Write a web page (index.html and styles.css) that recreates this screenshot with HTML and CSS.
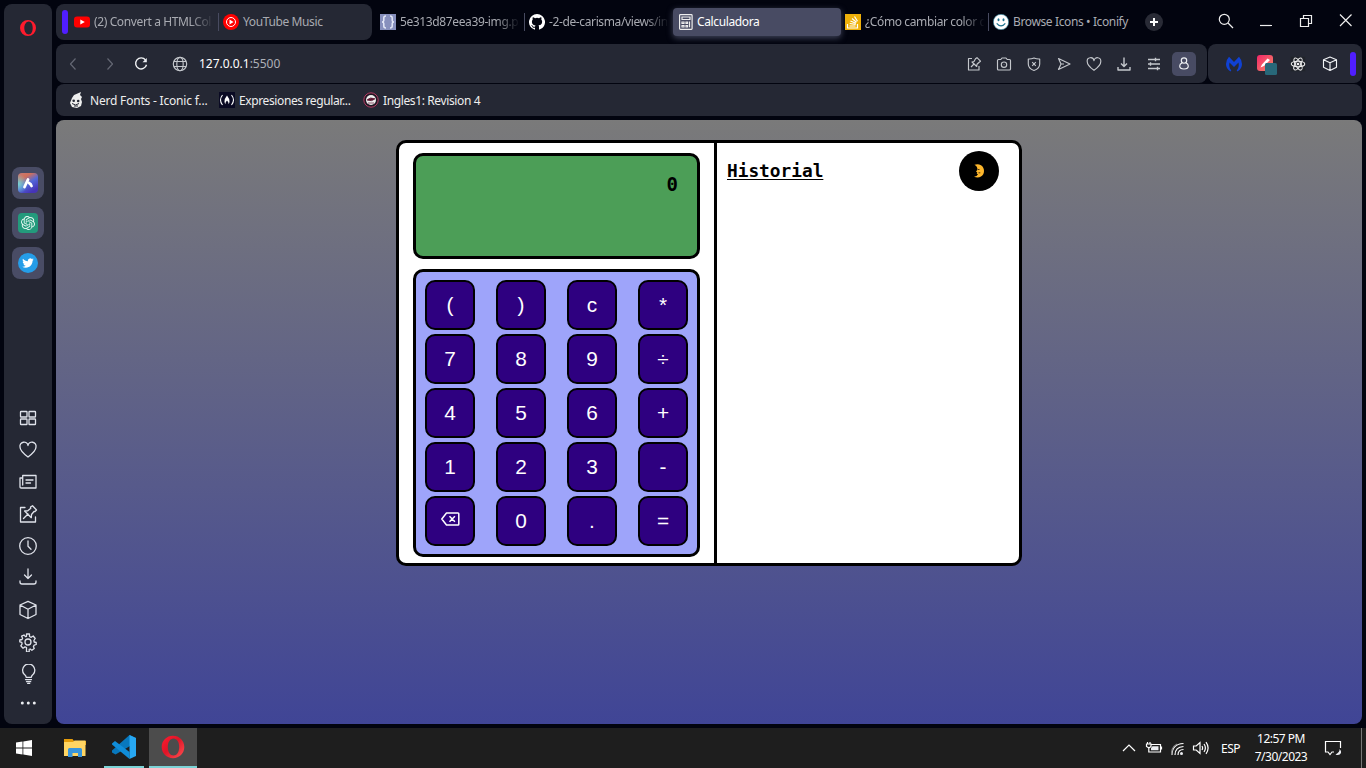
FILE: index.html
```html
<!DOCTYPE html>
<html lang="es">
<head>
<meta charset="utf-8">
<title>Calculadora</title>
<link rel="stylesheet" href="styles.css">
</head>
<body>
<div class="browser">
  <aside class="sidebar">
    <svg class="opera-logo" width="18" height="18" viewBox="0 0 18 18"><path fill="#ff1b2d" fill-rule="evenodd" d="M9 1a8 8 0 1 0 0 16A8 8 0 0 0 9 1zM9.800 2.500c2.500 0 3.900 2.900 3.900 6.500s-1.400 6.500-3.900 6.500S5.300 12.600 5.300 9s2-6.500 4.500-6.500z"/></svg>
    <div class="apps">
      <span class="app"><svg width="20" height="20" viewBox="0 0 20 20"><defs><linearGradient id="ar" x1="0" y1="0" x2=".6" y2="1"><stop offset="0" stop-color="#c77a76"/><stop offset=".3" stop-color="#d0705b"/><stop offset=".6" stop-color="#5268d8"/><stop offset="1" stop-color="#4634b8"/></linearGradient><radialGradient id="ac" cx="0" cy=".55" r=".5"><stop offset="0" stop-color="#73d5d8"/><stop offset="1" stop-color="#73d5d8" stop-opacity="0"/></radialGradient></defs><rect width="20" height="20" rx="4" fill="url(#ar)"/><rect width="20" height="20" rx="4" fill="url(#ac)"/><path d="M6.500 14 10 6.500M11 10q2 1 2.500 3" stroke="#fff" stroke-width="2.800" stroke-linecap="round" fill="none"/></svg></span>
      <span class="app"><svg width="20" height="20" viewBox="0 0 20 20"><rect width="20" height="20" rx="4" fill="#239a7c"/><path transform="translate(3 3) scale(.583)" fill="#e9faf4" d="M22.280 9.820a5.980 5.980 0 0 0-.52-4.910 6.050 6.050 0 0 0-6.510-2.900A6.070 6.070 0 0 0 4.980 4.180a5.980 5.980 0 0 0-4 2.900 6.050 6.050 0 0 0 .74 7.100 5.980 5.980 0 0 0 .51 4.910 6.050 6.050 0 0 0 6.510 2.900A5.980 5.980 0 0 0 13.260 24a6.060 6.060 0 0 0 5.770-4.210 5.990 5.990 0 0 0 4-2.900 6.060 6.060 0 0 0-.75-7.070zM13.260 22.430a4.480 4.480 0 0 1-2.880-1.040l.14-.08 4.780-2.760a.8.8 0 0 0 .39-.68v-6.740l2.020 1.170a.07.07 0 0 1 .04.05v5.580a4.500 4.500 0 0 1-4.490 4.500zM3.600 18.300a4.470 4.470 0 0 1-.54-3.010l.14.080 4.780 2.760a.77.77 0 0 0 .78 0l5.840-3.370v2.330a.08.08 0 0 1-.03.06L9.740 19.950A4.500 4.500 0 0 1 3.600 18.300zM2.340 7.900a4.490 4.490 0 0 1 2.370-1.970V11.600a.77.77 0 0 0 .39.68l5.810 3.350-2.020 1.170a.08.08 0 0 1-.07 0L3.990 14.010A4.500 4.500 0 0 1 2.340 7.900zM18.940 11.750l-5.840-3.370 2.020-1.160a.08.08 0 0 1 .07 0l4.830 2.790a4.490 4.490 0 0 1-.68 8.100v-5.680a.79.79 0 0 0-.4-.68zM20.950 8.720l-.14-.09-4.780-2.760a.78.78 0 0 0-.78 0L9.410 9.240V6.910a.07.07 0 0 1 .03-.06l4.830-2.790a4.500 4.500 0 0 1 6.680 4.660zM8.310 12.860l-2.020-1.160a.08.08 0 0 1-.04-.06V6.070a4.500 4.500 0 0 1 7.380-3.450l-.14.08-4.780 2.760a.8.8 0 0 0-.39.68zM9.400 10.500 12 9l2.610 1.500v3L12 15l-2.600-1.500z" fill-rule="evenodd"/></svg></span>
      <span class="app"><svg width="20" height="20" viewBox="0 0 20 20"><circle cx="10" cy="10" r="10" fill="#259de8"/><path transform="translate(4.200 4.300) scale(.48)" fill="#fff" d="M23.950 4.570a10 10 0 0 1-2.820.77 4.960 4.960 0 0 0 2.160-2.720c-.95.550-2 .95-3.130 1.180a4.920 4.920 0 0 0-8.380 4.480C7.690 8.090 4.070 6.130 1.640 3.160a4.820 4.820 0 0 0-.67 2.470c0 1.710.87 3.210 2.190 4.100a4.900 4.900 0 0 1-2.230-.62v.06a4.920 4.920 0 0 0 3.950 4.830 5 5 0 0 1-2.210.08 4.940 4.940 0 0 0 4.600 3.420A9.870 9.870 0 0 1 0 19.540a13.990 13.990 0 0 0 7.550 2.210c9.050 0 14-7.500 14-13.980v-.64a9.940 9.940 0 0 0 2.400-2.560z"/></svg></span>
    </div>
    <nav class="side-icons">
      <span><svg viewBox="0 0 20 20"><rect x="2.500" y="3.500" width="6.500" height="5.500" rx=".6"/><rect x="11" y="3.500" width="6.500" height="5.500" rx=".6"/><rect x="2.500" y="11" width="6.500" height="5.500" rx=".6"/><rect x="11" y="11" width="6.500" height="5.500" rx=".6"/></svg></span>
      <span><svg viewBox="0 0 20 20"><path d="M10 17C6 14 2 10.500 2 7a4 4 0 0 1 8-1.500A4 4 0 0 1 18 7c0 3.500-4 7-8 10z"/></svg></span>
      <span><svg viewBox="0 0 20 20"><path d="M4.700 3.500H18v12.500H3.200q-1.200 0-1.200-1.200V6h2.700zM4.700 6v7M8 8h7M8 11h4.500"/></svg></span>
      <span><svg viewBox="0 0 20 20"><path d="M7 3.500H2.500v14.500H17.500v-5M12.500 3l2-1.300L18.500 6l-1.500 1.500-1 0-2.500 3-.2 3.200-6.700-6.700 3.200-.2 3-2.500zM10 10l-4.500 4.500"/></svg></span>
      <span><svg viewBox="0 0 20 20"><circle cx="10" cy="10" r="8.300"/><path d="M10 5v5.300l3 3"/></svg></span>
      <span><svg viewBox="0 0 20 20"><path d="M10 1v9.500M6.500 7l3.500 3.500L13.500 7M2 13v1q0 2 2 2h12q2 0 2-2v-1"/></svg></span>
      <span><svg viewBox="0 0 20 20"><path d="M10 1.300 18 5v9.500l-8 4-8-4V5zM2 5l8 4.300L18 5M10 9.300v9"/></svg></span>
      <span><svg viewBox="0 0 20 20"><circle cx="10" cy="10" r="3"/><path d="M8.500 2h3v2.500l1.700.8 2-1.300 2 2.500-1.300 2 .3 1.500 2 .5v2l-2 .6-.8 1.500.8 2-2.300 1.700-1.700-1.300-1 .3v2.500H8.500V15.500l-1.500-.6-2 1.300-2.200-2.400 1.300-2-.3-1.500-2-.5V8l2.200-.5.600-1.300-1-2L6 3l1.500 1.600 1-.3z"/></svg></span>
      <span><svg viewBox="0 0 20 20"><path d="M8.300 13.300Q8 11.500 6 10a6.100 6.100 0 1 1 9.400 0q-1.900 1.500-2.200 3.300zM7.500 15.600h6M8.500 17.700h4.200M9.700 19.500h2"/></svg></span>
      <span class="more"><svg viewBox="0 0 20 20"><g class="solid"><circle cx="4.300" cy="10" r="1.500"/><circle cx="10.300" cy="10" r="1.500"/><circle cx="16.300" cy="10" r="1.500"/></g></svg></span>
    </nav>
  </aside>
  <main class="main">
    <header class="tabs">
      <div class="tab-group">
        <i class="accent"></i>
        <div class="tab split"><svg class="fav" viewBox="0 0 16 16"><rect y="2.500" width="16" height="11" rx="3" fill="#f00"/><path fill="#fff" d="M6.300 5.400v5.200L10.800 8z"/></svg><span class="title fade">(2) Convert a HTMLCol</span></div>
        <div class="tab"><svg class="fav" viewBox="0 0 16 16"><circle cx="8" cy="8" r="8" fill="#f00"/><circle cx="8" cy="8" r="4.500" fill="none" stroke="#fff"/><path fill="#fff" d="M6.500 5.500v5L10.600 8z"/></svg><span class="title">YouTube Music</span></div>
      </div>
      <div class="tab split"><svg class="fav" viewBox="0 0 16 16"><rect width="16" height="16" fill="#8790bd"/><path d="M6 2Q3.800 2 3.800 4v2.500Q3.800 8 2 8q1.800 0 1.800 1.500V12q0 2 2.200 2M10 2q2.200 0 2.200 2v2.500Q12.200 8 14 8q-1.800 0-1.800 1.500V12q0 2-2.200 2" fill="none" stroke="#e3e7f7" stroke-width="1.500"/></svg><span class="title fade">5e313d87eea39-img.p</span></div>
      <div class="tab wide"><svg class="fav" viewBox="0 0 16 16"><path fill="#fff" d="M8 0a8 8 0 0 0-2.530 15.590c.4.070.55-.17.550-.38v-1.490c-2.230.49-2.700-.95-2.700-.95-.36-.92-.89-1.170-.89-1.170-.73-.5.060-.49.060-.49.800.06 1.230.83 1.230.83.710 1.220 1.870.87 2.330.66.070-.52.280-.87.510-1.070-1.780-.2-3.640-.89-3.640-3.950 0-.87.310-1.590.82-2.150-.08-.2-.36-1.020.08-2.120 0 0 .67-.21 2.200.82a7.660 7.660 0 0 1 4 0c1.530-1.040 2.200-.82 2.200-.82.440 1.100.160 1.920.080 2.120.51.560.820 1.270.820 2.150 0 3.070-1.870 3.750-3.650 3.950.290.250.540.730.540 1.480v2.200c0 .21.150.46.550.38A8 8 0 0 0 8 0z"/></svg><span class="title fade">-2-de-carisma/views/in</span></div>
      <div class="tab active"><svg class="fav" viewBox="0 0 16 16"><g fill="none" stroke="#eee" stroke-width="1.200"><rect x="1.600" y=".6" width="12.500" height="14.800" rx=".8"/><path d="M4 3h8v2.500H4zM4 8h2v1.500H4zM4 11.500h2V13H4zM8 8h1.500v1.500H8zM8 11.500h1.500V13H8zM11.500 7.500v5.800"/></g></svg><span class="title">Calculadora</span></div>
      <div class="tab so split"><svg class="fav" viewBox="0 0 16 16"><rect width="16" height="16" fill="#efb10a"/><path d="M2.500 10v4h10v-4M4.500 12h6M4.700 9.500l6 .9M5.400 7l5.500 2.300M7 4.500l4.500 3.800M9.500 2.500l3 4.800" stroke="#fff" stroke-width="1.200" fill="none"/></svg><span class="title fade">¿Cómo cambiar color d</span></div>
      <div class="tab last"><svg class="fav" viewBox="0 0 16 16"><circle cx="8" cy="8" r="7.700" fill="#fff" stroke="#1b718d" stroke-width=".6"/><ellipse cx="5.500" cy="5.800" rx="1" ry="1.500" fill="#1b718d"/><ellipse cx="10.500" cy="5.800" rx="1" ry="1.500" fill="#1b718d"/><path d="M3.700 9.300Q8 14.500 12.300 9.300" stroke="#1b718d" stroke-width="1.200" fill="none"/></svg><span class="title">Browse Icons • Iconify</span></div>
      <span class="plus"><svg width="18" height="18" viewBox="0 0 18 18"><circle cx="9" cy="9" r="9" fill="#292b36"/><path d="M9 5v8M5 9h8" stroke="#fff" stroke-width="2"/></svg></span>
      <div class="window-controls">
        <svg width="20" height="20" viewBox="0 0 20 20"><circle cx="8.300" cy="7.300" r="5"/><path d="m12 11 5 5"/></svg>
        <svg width="20" height="20" viewBox="0 0 20 20"><path d="M4 13.500h12"/></svg>
        <svg width="20" height="20" viewBox="0 0 20 20"><path d="M4.500 6.500h8v8h-8zM7.500 6V3.500h8v8H13"/></svg>
        <svg width="20" height="20" viewBox="0 0 20 20"><path d="m4 2.500 11.500 11.500m0-11.500L4 14"/></svg>
      </div>
    </header>
    <div class="toolbar">
      <div class="address">
        <svg class="ic dim back" viewBox="0 0 20 20"><path d="M12.500 4.500 7.500 10l5 5.500"/></svg>
        <svg class="ic dim fwd" viewBox="0 0 20 20"><path d="m7.500 4.500 5 5.500-5 5.500"/></svg>
        <svg class="ic bright reload" viewBox="0 0 20 20"><path d="M14.500 6a5.500 5.500 0 1 0 1 4.800" stroke-width="1.400"/><path class="solid" d="M15.800 4v4.300h-4.300z"/></svg>
        <svg class="ic globe" viewBox="0 0 20 20"><circle cx="10" cy="10" r="6.700"/><ellipse cx="10" cy="10" rx="3.200" ry="6.700"/><path d="M4 7.500h12M4 12.500h12"/></svg>
        <span class="url">127.0.0.1<span>:5500</span></span>
        <div class="actions">
          <span><svg class="ic" viewBox="0 0 20 20"><path d="M8 4.500H4.500v11.500h10.500v-4M11.500 4.800 13 3.700l3.500 3.500-1.300 1-2.200 2-.3 2.300L8 8l2-.5zM10.500 9.500l-3.500 3.500"/></svg></span>
          <span><svg class="ic" viewBox="0 0 20 20"><path d="M4.500 5.500h2.300l1.200-1.500h4l1.200 1.500h2.300q1 0 1 1V15q0 1-1 1h-11q-1 0-1-1V6.500q0-1 1-1z"/><circle cx="10" cy="10.700" r="2.700"/><circle class="solid" cx="10" cy="10.700" r=".4"/></svg></span>
          <span><svg class="ic" viewBox="0 0 20 20"><path d="M10 4q3 1.200 5.700 1v5q0 4.500-5.700 6.500Q4.300 14.500 4.300 10V5q2.700.2 5.700-1zM8.200 8.200l3.600 3.600m0-3.600-3.600 3.600"/></svg></span>
          <span><svg class="ic" viewBox="0 0 20 20"><path d="M4.500 4.500 16 10 4.500 15.500 7 10zM7 10h3"/></svg></span>
          <span><svg class="ic" viewBox="0 0 20 20"><path d="M10 16.300C6 13.500 3.200 11 3.200 7.500a3.400 3.400 0 0 1 6.800-.8 3.400 3.400 0 0 1 6.800.8c0 3.500-2.800 6-6.800 8.800z"/></svg></span>
          <span><svg class="ic" viewBox="0 0 20 20"><path d="M10 3.500v9M7 9.500l3 3 3-3M4 13v3h12v-3" stroke-width="1.400"/></svg></span>
          <span><svg class="ic" viewBox="0 0 20 20"><path d="M4 5.500h12M4 10h12M4 14.500h12M11.500 3.800v3.400M6.500 8.300v3.400M13.500 12.800v3.400" stroke-width="1.400"/></svg></span>
          <span class="profile"><svg class="ic bright" viewBox="0 0 20 20"><circle cx="10" cy="6.500" r="2.700"/><path d="M8.200 8.800Q5.700 10 5.700 12q0 3 4.300 3t4.300-3q0-2-2.500-3.200"/></svg></span>
        </div>
      </div>
      <div class="extensions">
        <svg width="20" height="20" viewBox="0 0 20 20"><path fill="#1041d2" d="M6.500 17.500Q2 15 2 10 2 6 5 2.800L10 8l5-5.200Q18 6 18 10q0 5-4.500 7.500l-.8-1Q15.500 13 14.500 8.500L10 13 5.500 8.500Q4.500 13 7.300 16.500z"/></svg>
        <svg width="22" height="22" viewBox="0 0 22 22"><defs><linearGradient id="pk" x1="0" y1="0" x2="1" y2="1"><stop stop-color="#f32568"/><stop offset="1" stop-color="#f58c67"/></linearGradient></defs><rect x="1" y="2" width="16" height="16" rx="3" fill="url(#pk)"/><path d="M4.500 14.500 6 11.500l5.500-6L14 7 8 13z" fill="#fff"/><rect x="9" y="10" width="12" height="12" rx="1.500" fill="#286879"/></svg>
        <svg width="18" height="18" viewBox="0 0 20 20"><rect x="2" y="2" width="16" height="16" fill="#20232a"/><g fill="none" stroke="#eee" stroke-width="1.200"><ellipse cx="10" cy="10" rx="7.500" ry="3"/><ellipse cx="10" cy="10" rx="7.500" ry="3" transform="rotate(60 10 10)"/><ellipse cx="10" cy="10" rx="7.500" ry="3" transform="rotate(120 10 10)"/></g><circle cx="10" cy="10" r="1.500" fill="#eee"/></svg>
        <svg class="ic bright" viewBox="0 0 20 20"><path d="M10 3 16.500 5.700v7.500L10 16.400 3.500 13.200V5.700zM3.500 5.700l6.500 3 6.500-3M10 8.700v7.500"/></svg>
        <i class="accent"></i>
      </div>
    </div>
    <div class="bookmarks">
      <span class="bookmark b1"><svg width="16" height="16" viewBox="0 0 16 16"><path fill="#eee" d="M5 3 12 0l-1 3 2 2-1 2 1 3-1 4-4 2-5-1-2-4 2-5z"/><circle cx="4.700" cy="8.700" r="1.300" fill="#252834"/><circle cx="9.200" cy="9" r="1.300" fill="#252834"/><path d="M3 11.500q3.500 3 7 0M5 14h4" stroke="#252834" fill="none"/></svg><span>Nerd Fonts - Iconic f...</span></span>
      <span class="bookmark b2"><svg width="16" height="16" viewBox="0 0 16 16"><rect width="16" height="16" fill="#0a0a23"/><path d="M3.500 3Q-.5 8 3.500 13M12.500 3q4 5 0 10" stroke="#fff" stroke-width="1.100" fill="none"/><path fill="#fff" d="M8 3.500q-2.500 3-2.500 6Q5.500 11 6.500 12q-.3-2 1.500-3.500Q9.800 10 9.500 12q1-1 1-2.500 0-3-2.500-6z"/></svg><span>Expresiones regular...</span></span>
      <span class="bookmark b3"><svg width="16" height="16" viewBox="0 0 16 16"><circle cx="8" cy="8" r="7.200" fill="#221824" stroke="#b23c62"/><circle cx="8" cy="8" r="5" fill="#eee"/><path d="M4 8q3-3.500 8-1.200Q9 10 4 8zM5 11h6" fill="#5a1630" stroke="#5a1630" stroke-width=".7"/></svg><span>Ingles1: Revision 4</span></span>
    </div>
    <section class="page">
      <div class="calculator">
        <div class="left">
          <div class="display">0</div>
          <div class="keys">
            <button>(</button><button>)</button><button>c</button><button>*</button>
            <button>7</button><button>8</button><button>9</button><button>÷</button>
            <button>4</button><button>5</button><button>6</button><button>+</button>
            <button>1</button><button>2</button><button>3</button><button>-</button>
            <button class="erase"><svg width="20" height="16" viewBox="0 0 20 16"><path d="M6.500 2H18q.8 0 .8.800v10.400q0 .8-.8.800H6.500L1.800 8zM9.500 5.300l5.400 5.400m0-5.400-5.400 5.400" fill="none" stroke="#fff" stroke-width="1.500" stroke-linejoin="round"/></svg></button><button>0</button><button>.</button><button>=</button>
          </div>
        </div>
        <div class="history">
          <h3>Historial</h3>
          <span class="theme"><svg width="12" height="16" viewBox="0 0 12 16"><path fill="#fdb62c" d="M1.500 1.800Q5 .5 8 2.300q3 2 3 5.700t-3 5.500q-3 1.800-7 .2 3-.5 4-2.500L3.700 10.500l.6-1L3 8.500l1.500-1.700Q4.500 3.500 1.500 1.800z"/><path d="M5 6.500h1.500M5.500 9.800h1.800" stroke="#4b3511"/></svg></span>
        </div>
      </div>
    </section>
  </main>
</div>
<footer class="taskbar">
  <div class="launchers">
    <span class="task"><svg width="18" height="18" viewBox="0 0 18 18"><path fill="#fff" d="M1 3.500 7.500 2.500v6H1zM8.300 2.400 17 1v7.500H8.300zM1 9.500h6.500v6L1 14.500zM8.300 9.500H17V17l-8.700-1.400z"/></svg></span>
    <span class="task explorer"><svg width="22" height="20" viewBox="0 0 22 20"><path fill="#e59c0a" d="M0 1h8.500l1.500 2H22v4H0z"/><path fill="#ffd563" d="M0 4h9l1.500-1.500H21.500V18H0z"/><path fill="#3895dc" d="M4 11.500q0-1.500 1.500-1.500h11q1.500 0 1.500 1.500V19h-4v-4H8.500v4H4z"/></svg></span>
    <span class="task code"><svg width="24" height="24" viewBox="0 0 24 24"><path fill="#0878bd" d="M17.500 0 24 3v4.500L3.500 19.500 0 17.500v-2z"/><path fill="#108dd9" d="M0 8.500 3 6l14.500 11v7L0 9.500z"/><path fill="#27a8f3" d="M17.500 0 24 3v18l-6.500 3z"/></svg></span>
    <span class="task opera"><svg width="24" height="24" viewBox="0 0 24 24"><defs><linearGradient id="op" x1="0" y1="0" x2="1" y2="1"><stop stop-color="#ff1c30"/><stop offset=".45" stop-color="#df1427"/><stop offset="1" stop-color="#ff5151"/></linearGradient></defs><path fill="url(#op)" fill-rule="evenodd" d="M12 .8C5.600.8.700 5.700.700 12S5.600 23.200 12 23.200 23.300 18.300 23.300 12 18.400.8 12 .8zM12.500 3.500c3.300 0 5.700 3.500 5.700 8.500s-2.400 8.500-5.700 8.500S6.800 17 6.800 12 9.200 3.500 12.500 3.500z"/></svg></span>
  </div>
  <div class="tray">
    <svg class="w1" width="16" height="18" viewBox="0 0 16 18"><path d="m2 12 6-6 6 6"/></svg>
    <svg class="w2" width="18" height="18" viewBox="0 0 18 18"><path d="M6 5.500h9.500v7.500H5.500M16.500 7.500v3M2.500 3v2M5 3v2M1.500 5h4.500v2.500l-2 1.500-2.500-1.500zM3.800 9v4H6"/><path class="fill" d="M7.500 7.200h6v4H6V9z"/></svg>
    <svg class="w3" width="18" height="18" viewBox="0 0 18 18"><path d="M3 16Q3 5 14.500 4.500M6 16Q6 8 14.500 7.500M9 16q0-5.500 5.500-5.500" stroke-width="1.200"/><path d="M3 16Q1.500 9 8 5" stroke="#888"/><circle class="fill" cx="12.500" cy="14.500" r="1.500"/></svg>
    <svg class="w4" width="18" height="18" viewBox="0 0 18 18"><path d="M1.500 7h2.700l3.800-3.500v11L4.200 11H1.500zM10 7q1.200 2 0 4M12 5q2.800 4 0 8M14 3.200q4.200 5.800 0 11.600"/></svg>
    <span class="lang">ESP</span>
    <div class="clock"><span class="time">12:57 PM</span><span class="date">7/30/2023</span></div>
    <svg class="w5" width="18" height="18" viewBox="0 0 18 18"><path d="M10 13H8l-2 2.500L4 13H1.500V2.500h15V9"/><path class="fill" d="M15.500 10q.5 3-4 5.500 4 1.500 5.500-1.500.7-2-1.500-4z"/></svg>
    <i class="peek"></i>
  </div>
</footer>
</body>
</html>
```
FILE: styles.css
```css
* { box-sizing: border-box; }
body { margin: 0; width: 1366px; height: 768px; overflow: hidden; background: #02040f; font: 12px "Noto Sans", "Open Sans", sans-serif; color: #eee; }
svg { display: block; flex: none; }
.browser { display: flex; gap: 4px; height: 728px; padding: 4px; }
.sidebar { width: 48px; height: 720px; border-radius: 8px; background: #252834; display: flex; flex-direction: column; align-items: center; }
.opera-logo { margin-top: 15px; }
.apps { display: flex; flex-direction: column; gap: 8px; margin-top: 130px; }
.app { display: flex; width: 32px; height: 32px; border-radius: 8px; background: #494c65; align-items: center; justify-content: center; padding-bottom: 1px; }
.side-icons { display: flex; flex-direction: column; margin-top: 122.5px; }
.side-icons span { width: 32px; height: 32px; display: flex; align-items: center; justify-content: center; padding-right: 1px; }
.side-icons .more { height: 27px; }
.side-icons svg { width: 20px; height: 20px; fill: none; stroke: #dfe2ea; stroke-width: 1.3; stroke-linejoin: round; stroke-linecap: round; }
svg .solid, .tray .fill { fill: #eceef2; stroke: none; }
.main { flex: 1; min-width: 0; display: flex; flex-direction: column; }
.tabs { display: flex; height: 36px; align-items: center; }
.tab-group { display: flex; align-items: center; width: 316px; height: 36px; border-radius: 8px; background: #252834; margin-right: 8px; padding-left: 6px; }
.accent { width: 6px; height: 24px; border-radius: 3px; background: #501eff; flex: none; }
.tab-group .accent { margin-right: 6px; }
.tab { display: flex; align-items: center; width: 149px; height: 28px; gap: 4px; color: #a9abb2; flex: none; position: relative; white-space: nowrap; }
.fav { width: 16px; height: 16px; }
.title { line-height: 18px; }
.fade { width: 120px; -webkit-mask-image: linear-gradient(90deg, #000 80%, transparent 100%); mask-image: linear-gradient(90deg, #000 80%, transparent 100%); }
.split::after { content: ""; position: absolute; right: 4px; top: 5px; width: 1px; height: 18px; background: #484b60; }
.tab.wide { width: 144px; }
.tab.active { width: 168px; padding-left: 5px; background: #484b63; border-radius: 4px; color: #fff; box-shadow: 0 2px 6px #41455b; gap: 3px; }
.tab.so { margin-left: 4px; width: 148px; }
.tab.last { width: 152px; }
.window-controls { display: flex; gap: 20px; margin-left: auto; padding-right: 6px; }
.window-controls svg { fill: none; stroke: #eee; stroke-width: 1.2; }
.toolbar { display: flex; gap: 1px; margin-top: 4px; height: 39px; }
.address, .extensions { background: #252834; border-radius: 8px; display: flex; align-items: center; }
.address { width: 1151px; padding-left: 7px; }
.ic { width: 20px; height: 20px; fill: none; stroke: #c4c7cc; stroke-width: 1.15; stroke-linejoin: round; }
.dim { stroke: #656874; }
.bright { stroke: #f0f2f4; }
.fwd { margin-left: 17px; }
.reload { margin-left: 11px; }
.globe { margin-left: 19px; }
.url { margin-left: 9px; color: #fff; letter-spacing: -.02px; }
.url span { color: #adb0b8; }
.actions { display: flex; margin-left: auto; padding-right: 8px; }
.actions > span { width: 30px; height: 24px; display: flex; align-items: center; justify-content: center; }
.actions .profile { width: 24px; margin: 0 3px; border-radius: 5px; background: #484b63; }
.extensions { width: 154px; padding-left: 16px; }
.extensions svg:nth-child(2) { margin-left: 12px; }
.extensions svg:nth-child(3) { margin-left: 11px; }
.extensions svg:nth-child(4) { margin-left: 13px; }
.extensions .accent { margin-left: 10px; }
.bookmarks { display: flex; align-items: center; margin-top: 1px; height: 32px; border-radius: 8px; background: #252834; padding-left: 13px; }
.bookmark { display: flex; align-items: center; gap: 4px; white-space: nowrap; }
.b1 { width: 150px; gap: 5px; }
.b2 { width: 144px; }
.page { margin-top: 4px; height: 604px; border-radius: 8px; background: linear-gradient(#7a7a7a, #404596); padding: 20px 0 0 340px; }
.calculator { display: flex; width: 626px; height: 426px; border: 3px solid #000; border-radius: 10px; background: #fff; color: #000; }
.left { width: 318px; border-right: 3px solid #000; padding: 10px 0 0 14px; }
.display { width: 287px; height: 106px; border: 3px solid #000; border-radius: 10px; background: #4c9e57; padding: 16px 19px; text-align: right; font: bold 19px/24px "DejaVu Sans Mono", monospace; }
.keys { width: 287px; height: 288px; margin-top: 10px; border: 3px solid #000; border-radius: 10px; background: #9ea4fa; padding: 8px 9px; display: grid; grid-template-columns: repeat(4, 50px); grid-auto-rows: 50px; gap: 4px 21px; }
.keys button { border: 2px solid #000; border-radius: 10px; background: #2e0080; color: #fff; font: 20.8px "Liberation Sans", Arial, sans-serif; padding: 0; }
.erase svg { margin: -4px auto 0; }
.history { flex: 1; display: flex; justify-content: space-between; padding: 8px 20px 0 10px; }
h3 { margin: 8px 0 0; font: bold 17.8px/24px "DejaVu Sans Mono", monospace; text-decoration: underline; text-underline-offset: 2px; text-decoration-thickness: 1px; height: 24px; }
.theme { width: 40px; height: 40px; border-radius: 50%; background: #000; display: flex; align-items: center; justify-content: center; }
.taskbar { height: 40px; background: #1e1e1e; display: flex; justify-content: space-between; }
.launchers, .tray { display: flex; align-items: center; }
.task { width: 48px; height: 40px; display: flex; align-items: center; justify-content: center; }
.explorer { width: 56px; padding-right: 3px; }
.code { width: 40px; border-bottom: 2px solid #7bd3d6; }
.opera { margin-left: 5px; background: #4c4c4c; border-bottom: 2px solid #7bd3d6; }
.tray { color: #fff; }
.tray svg { fill: none; stroke: #fff; stroke-width: 1.2; }
.w2 { margin-left: 8px; }
.w3 { margin-left: 6px; }
.w4 { margin-left: 5px; }
.lang { width: 20px; margin-left: 11px; white-space: nowrap; }
.clock { width: 54px; margin-left: 13px; line-height: 18px; display: flex; flex-direction: column; align-items: center; white-space: nowrap; }
.w5 { margin-left: 16px; }
.peek { width: 1px; height: 40px; background: #777; margin: 0 4px 0 19px; }
.title, .bookmark > span { letter-spacing: -.38px; }
.b1 > span { letter-spacing: -.2px; }
.lang, .time, .date { letter-spacing: -.5px; }
```
